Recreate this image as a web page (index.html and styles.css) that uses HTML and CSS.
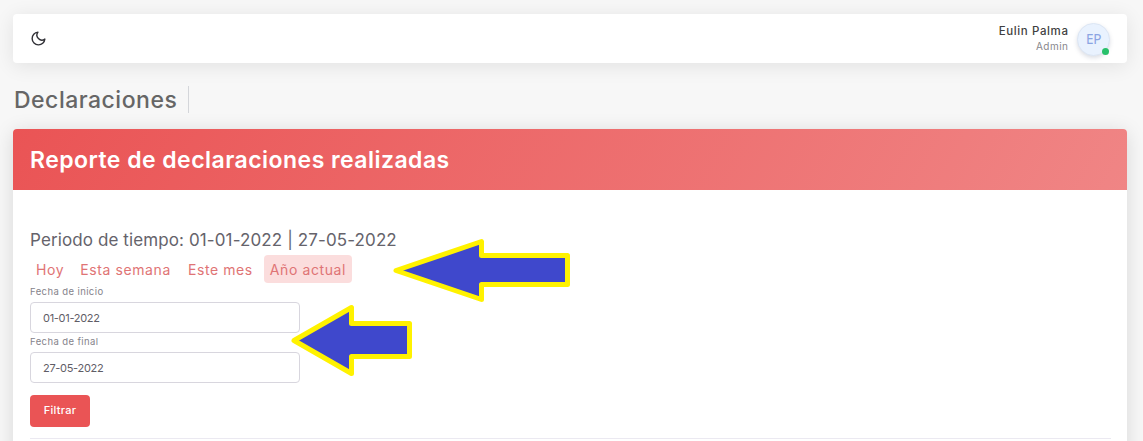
FILE: index.html
```html
<!DOCTYPE html>
<html lang="es">
<head>
<meta charset="utf-8">
<title>Declaraciones</title>
<link rel="stylesheet" href="styles.css">
</head>
<body>
<header class="navbar">
  <svg class="moon" viewBox="0 0 24 24" width="17" height="17" aria-hidden="true"><path d="M21 12.79A9 9 0 1 1 11.21 3 7 7 0 0 0 21 12.79z"/></svg>
  <div class="user">
    <div class="user-text">
      <span class="user-name">Eulin Palma</span>
      <span class="user-role">Admin</span>
    </div>
    <div class="avatar"><span class="initials">EP</span><i class="status"></i></div>
  </div>
</header>
<div class="title-row"><h1 class="title"><span>Declaraciones</span></h1></div>
<main class="card">
  <div class="card-header"><h2 class="card-title"><span>Reporte de declaraciones realizadas</span></h2></div>
  <div class="card-body">
    <h3 class="period"><span>Periodo de tiempo: 01-01-2022 | 27-05-2022</span></h3>
    <nav class="ranges">
      <a class="range today">Hoy</a>
      <a class="range week">Esta semana</a>
      <a class="range month">Este mes</a>
      <a class="range year active">Año actual</a>
    </nav>
    <form class="filter">
      <label class="label"><span>Fecha de inicio</span></label>
      <div class="field start"><span>01-01-2022</span></div>
      <label class="label"><span>Fecha de final</span></label>
      <div class="field end"><span>27-05-2022</span></div>
      <button class="submit" type="button"><span>Filtrar</span></button>
    </form>
    <hr class="rule">
  </div>
</main>
<svg class="arrows" width="1143" height="441" viewBox="0 0 1143 441" aria-hidden="true">
  <path d="M396 270.500L481.500 241.500V255.500H567.500V284.500H481.500V299.500Z"/>
  <path d="M294 340.500L351.500 307.500V323.500H409.500V356.500H351.500V373.500Z"/>
</svg>
</body>
</html>
```
FILE: styles.css
```css
* { box-sizing: border-box; }
body {
  margin: 0;
  height: 441px;
  padding: 14px 16px 0 13px;
  overflow: hidden;
  background: #f7f7f7;
  font-family: Inter, "Open Sans", sans-serif;
  color: #6e6b7b;
}
h1, h2, h3 { margin: 0; }
.navbar {
  display: flex;
  align-items: center;
  justify-content: space-between;
  height: 49px;
  padding: 0 17px;
  border-radius: 4px;
  background: #fff;
  box-shadow: 0 3px 20px rgba(0, 0, 0, .09);
}
.moon { fill: none; stroke: #303036; stroke-width: 2; stroke-linecap: round; stroke-linejoin: round; }
.user { display: flex; align-items: center; gap: 9px; }
.user-text { display: flex; flex-direction: column; align-items: flex-end; margin-top: -1px; }
.user-name { font-size: 11.500px; line-height: 16px; font-weight: 500; letter-spacing: .62px; margin-right: -.62px; color: #3f3f42; }
.user-role { font-size: 10px; line-height: 15px; letter-spacing: .5px; margin-right: -.5px; color: #88878c; }
.avatar {
  position: relative;
  width: 33px;
  height: 33px;
  margin-top: 2px;
  border: 1px solid #dce6f4;
  border-radius: 50%;
  background: #e9f2fe;
  box-shadow: 0 2px 4px rgba(80, 90, 120, .2);
  text-align: center;
  color: #8ba4e3;
}
.initials { font: 13.500px/31px "Noto Sans", sans-serif; letter-spacing: -.3px; }
.status { position: absolute; right: 0; bottom: 0; width: 7px; height: 7px; border-radius: 50%; background: #28c06a; }
.title-row { display: flex; height: 66px; padding: 23px 0 0; }
.title { height: 27px; width: 176px; padding-left: 1px; border-right: 1px solid #d4d6da; font-size: 23px; line-height: 28px; font-weight: 500; letter-spacing: .5px; color: #666; white-space: nowrap; }
.card { height: 330px; border-radius: 4px 4px 0 0; background: #fff; box-shadow: 0 3px 20px rgba(0, 0, 0, .13); }
.card-header { height: 61px; padding: 16px 17px; border-radius: 4px 4px 0 0; background: linear-gradient(118deg, #ea5455, #f08585); }
.card-title { font-size: 23px; line-height: 30px; font-weight: 600; letter-spacing: .46px; color: #fff; }
.card-body { padding: 38px 16px 0 17px; }
.period { font-size: 17px; line-height: 24px; font-weight: 400; letter-spacing: .11px; color: #65636b; }
.ranges { display: flex; gap: 5px; height: 28px; margin-top: 3px; }
.range { padding: 0 6px; border-radius: 4px; font-size: 14px; line-height: 29px; letter-spacing: .6px; color: #df7475; white-space: nowrap; }
.range.today { margin-right: -1px; }
.range.active { background: #fbdddd; }
.filter { width: 270px; }
.label { display: block; height: 19px; font-size: 9.500px; line-height: 18px; letter-spacing: .4px; color: #85838b; }
.field { height: 31px; padding: 0 12px; border: 1px solid #d8d6de; border-radius: 4px; font-size: 11px; line-height: 30px; letter-spacing: -.3px; color: #5f5d66; }
.submit { display: block; width: 60px; height: 32px; margin-top: 12px; padding: 0 0 2px; border: 0; border-radius: 4px; background: #ea5455; font: 500 11px/30px Inter, sans-serif; letter-spacing: .3px; color: #fff; }
.rule { height: 1px; margin: 11px 0 0; border: 0; background: #ebe9f1; }
.arrows { position: absolute; inset: 0; pointer-events: none; }
.arrows path { fill: #3f48cc; stroke: #fff200; stroke-width: 5; stroke-linejoin: round; }
```
